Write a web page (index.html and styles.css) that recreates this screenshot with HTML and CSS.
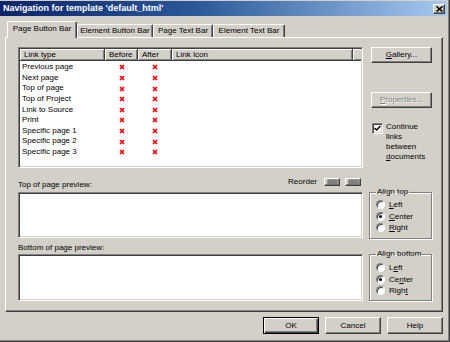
FILE: index.html
```html
<!DOCTYPE html>
<html>
<head>
<meta charset="utf-8">
<link rel="stylesheet" href="styles.css">
</head>
<body>
<div class="dialog">
  <div class="titlebar">
    <span class="title">Navigation for template 'default_html'</span>
    <span class="close"><svg width="7" height="6" viewBox="0 0 7 6"><path d="M0.5 0.5 L6.5 5.5 M6.5 0.5 L0.5 5.5" stroke="#000" stroke-width="1.6" fill="none"/></svg></span>
  </div>
  <div class="tabs">
    <div class="tab active t1">Page Button Bar</div>
    <div class="tab t2">Element Button Bar</div>
    <div class="tab t3">Page Text Bar</div>
    <div class="tab t4">Element Text Bar</div>
  </div>
  <div class="panel">
    <div class="left">
      <div class="list">
        <div class="list-head">
          <div class="hcell">Link type</div>
          <div class="hcell">Before</div>
          <div class="hcell">After</div>
          <div class="hcell">Link Icon</div>
          <div class="hcell"></div>
        </div>
        <div class="list-body">
          <div class="row"><span class="name">Previous page</span><span class="x"><svg viewBox="0 0 6 6"><path d="M1 1L5 5M5 1L1 5"/></svg></span><span class="x"><svg viewBox="0 0 6 6"><path d="M1 1L5 5M5 1L1 5"/></svg></span></div>
          <div class="row"><span class="name">Next page</span><span class="x"><svg viewBox="0 0 6 6"><path d="M1 1L5 5M5 1L1 5"/></svg></span><span class="x"><svg viewBox="0 0 6 6"><path d="M1 1L5 5M5 1L1 5"/></svg></span></div>
          <div class="row"><span class="name">Top of page</span><span class="x"><svg viewBox="0 0 6 6"><path d="M1 1L5 5M5 1L1 5"/></svg></span><span class="x"><svg viewBox="0 0 6 6"><path d="M1 1L5 5M5 1L1 5"/></svg></span></div>
          <div class="row"><span class="name">Top of Project</span><span class="x"><svg viewBox="0 0 6 6"><path d="M1 1L5 5M5 1L1 5"/></svg></span><span class="x"><svg viewBox="0 0 6 6"><path d="M1 1L5 5M5 1L1 5"/></svg></span></div>
          <div class="row"><span class="name">Link to Source</span><span class="x"><svg viewBox="0 0 6 6"><path d="M1 1L5 5M5 1L1 5"/></svg></span><span class="x"><svg viewBox="0 0 6 6"><path d="M1 1L5 5M5 1L1 5"/></svg></span></div>
          <div class="row"><span class="name">Print</span><span class="x"><svg viewBox="0 0 6 6"><path d="M1 1L5 5M5 1L1 5"/></svg></span><span class="x"><svg viewBox="0 0 6 6"><path d="M1 1L5 5M5 1L1 5"/></svg></span></div>
          <div class="row"><span class="name">Specific page 1</span><span class="x"><svg viewBox="0 0 6 6"><path d="M1 1L5 5M5 1L1 5"/></svg></span><span class="x"><svg viewBox="0 0 6 6"><path d="M1 1L5 5M5 1L1 5"/></svg></span></div>
          <div class="row"><span class="name">Specific page 2</span><span class="x"><svg viewBox="0 0 6 6"><path d="M1 1L5 5M5 1L1 5"/></svg></span><span class="x"><svg viewBox="0 0 6 6"><path d="M1 1L5 5M5 1L1 5"/></svg></span></div>
          <div class="row"><span class="name">Specific page 3</span><span class="x"><svg viewBox="0 0 6 6"><path d="M1 1L5 5M5 1L1 5"/></svg></span><span class="x"><svg viewBox="0 0 6 6"><path d="M1 1L5 5M5 1L1 5"/></svg></span></div>
        </div>
      </div>
      <div class="label-row">
        <span class="label">Top of page preview:</span>
        <div class="reorder">
          <span class="reorder-text">Reorder</span>
          <span class="mini"><span class="mini-icon"></span></span>
          <span class="mini"><span class="mini-icon"></span></span>
        </div>
      </div>
      <div class="preview top"></div>
      <div class="label-row2"><span class="label">Bottom of page preview:</span></div>
      <div class="preview bottom"></div>
    </div>
    <div class="right">
      <div class="btn gallery"><span><u>G</u>allery...</span></div>
      <div class="btn props disabled"><span><u>P</u>roperties...</span></div>
      <div class="check">
        <span class="checkbox"><svg width="7" height="7" viewBox="0 0 7 7"><path d="M0.5 3 L2.5 5 L6.5 1" stroke="#000" stroke-width="1.5" fill="none"/></svg></span>
        <span class="check-text">Continue<br>links<br>between<br><u>d</u>ocuments</span>
      </div>
      <fieldset class="group gtop">
        <legend>Align top</legend>
        <div class="radio-row"><span class="radio"></span><span><u>L</u>eft</span></div>
        <div class="radio-row"><span class="radio on"></span><span><u>C</u>enter</span></div>
        <div class="radio-row"><span class="radio"></span><span><u>R</u>ight</span></div>
      </fieldset>
      <fieldset class="group gbottom">
        <legend>Align bottom</legend>
        <div class="radio-row"><span class="radio"></span><span>L<u>e</u>ft</span></div>
        <div class="radio-row"><span class="radio on"></span><span>Ce<u>n</u>ter</span></div>
        <div class="radio-row"><span class="radio"></span><span>Righ<u>t</u></span></div>
      </fieldset>
    </div>
  </div>
  <div class="buttons">
    <div class="btn big default"><span>OK</span></div>
    <div class="btn big"><span>Cancel</span></div>
    <div class="btn big"><span>Help</span></div>
  </div>
</div>
</body>
</html>
```

FILE: styles.css
```css
html, body {
  margin: 0;
  padding: 0;
  background: #d4d0c8;
}
body {
  font-family: "Liberation Sans", Arial, sans-serif;
  font-size: 8px;
  color: #000;
}
.dialog {
  width: 450px;
  height: 342px;
  box-sizing: border-box;
  padding: 1px 3px 2px 0;
  background: #d4d0c8;
  box-shadow: inset -1px -1px 0 #404040, inset -2px -2px 0 #808080;
  display: flex;
  flex-direction: column;
}
.titlebar {
  height: 15px;
  flex: none;
  background: linear-gradient(to right, #0a246a 0%, #2c5a9a 45%, #a6caf0 100%);
  display: flex;
  align-items: center;
  justify-content: space-between;
}
.title {
  color: #fff;
  font-weight: bold;
  font-size: 9px;
  padding-left: 3px;
  line-height: 15px;
}
.close {
  width: 12px;
  height: 10px;
  box-sizing: border-box;
  margin-right: 2px;
  background: #d4d0c8;
  border-top: 1px solid #fff;
  border-left: 1px solid #fff;
  border-right: 1px solid #404040;
  border-bottom: 1px solid #404040;
  box-shadow: inset -1px -1px 0 #808080;
  display: flex;
  align-items: center;
  justify-content: center;
}
.close svg { display: block; }

.tabs {
  height: 21px;
  flex: none;
  display: flex;
  align-items: flex-end;
  padding-left: 7px;
}
.tab {
  height: 13px;
  box-sizing: border-box;
  border-top: 1px solid #fff;
  border-left: 1px solid #fff;
  border-right: 1px solid #404040;
  box-shadow: inset -1px 0 0 #808080;
  border-radius: 2px 2px 0 0;
  display: flex;
  align-items: center;
  justify-content: center;
  white-space: nowrap;
  line-height: 10px;
}
.tab.active {
  height: 17px;
  margin-bottom: -1px;
  background: #d4d0c8;
  position: relative;
  z-index: 1;
  padding-bottom: 2px;
}
.t1 { width: 70px; }
.t2 { width: 76px; }
.t3 { width: 60px; }
.t4 { width: 72px; }

.panel {
  margin-left: 5px;
  width: 438px;
  height: 275px;
  flex: none;
  box-sizing: border-box;
  border-top: 1px solid #fff;
  border-left: 1px solid #fff;
  border-right: 1px solid #404040;
  border-bottom: 1px solid #404040;
  box-shadow: inset -1px -1px 0 #808080;
  padding: 9px 0 0 12px;
  display: flex;
  gap: 6px;
}
.left {
  width: 345px;
  display: flex;
  flex-direction: column;
}
.list, .preview {
  box-sizing: border-box;
  background: #fff;
  border-top: 1px solid #808080;
  border-left: 1px solid #808080;
  border-right: 1px solid #fff;
  border-bottom: 1px solid #fff;
  box-shadow: inset 1px 1px 0 #404040, inset -1px -1px 0 #d4d0c8;
}
.list {
  height: 121px;
  padding: 1px;
}
.list-head {
  display: grid;
  grid-template-columns: 85px 33px 34px 181px 1fr;
  height: 12px;
}
.hcell {
  background: #d4d0c8;
  box-sizing: border-box;
  border-right: 1px solid #404040;
  border-bottom: 1px solid #404040;
  box-shadow: inset 1px 1px 0 #fff, inset -1px -1px 0 #808080;
  padding-left: 4px;
  line-height: 11px;
  white-space: nowrap;
  overflow: hidden;
}
.hcell:last-child { border-right: none; box-shadow: inset 1px 1px 0 #fff, inset 0 -1px 0 #808080; }
.list-body {
  padding-top: 1px;
}
.row {
  display: grid;
  grid-template-columns: 85px 33px 34px;
  height: 10.625px;
  line-height: 10.625px;
}
.name { padding-left: 2px; white-space: nowrap; }
.x {
  display: flex;
  align-items: center;
  justify-content: center;
}
.x svg {
  width: 6px;
  height: 6px;
  display: block;
}
.x path {
  stroke: #ff0000;
  stroke-width: 1.7;
  fill: none;
}

.label-row {
  height: 24px;
  flex: none;
  display: flex;
  justify-content: space-between;
  align-items: flex-end;
  padding-bottom: 2px;
  box-sizing: border-box;
}
.label { line-height: 10px; white-space: nowrap; }
.reorder {
  align-self: flex-start;
  margin-top: 10px;
  margin-right: 2px;
  height: 8px;
  display: flex;
  align-items: center;
  gap: 5px;
}
.reorder-text { margin-right: 2px; line-height: 10px; }
.mini {
  width: 16px;
  height: 8px;
  box-sizing: border-box;
  border-top: 1px solid #fff;
  border-left: 1px solid #fff;
  border-right: 1px solid #404040;
  border-bottom: 1px solid #404040;
  box-shadow: inset -1px -1px 0 #808080;
  display: flex;
  align-items: center;
  justify-content: center;
}
.mini-icon {
  width: 9px;
  height: 4px;
  background: #808080;
  box-shadow: 0 0 0 0.5px #606060;
}
.preview.top { height: 46px; flex: none; }
.label-row2 {
  height: 16px;
  flex: none;
  display: flex;
  align-items: flex-end;
  padding-bottom: 1px;
  box-sizing: border-box;
}
.preview.bottom { height: 47px; flex: none; }

.right {
  width: 63px;
  display: flex;
  flex-direction: column;
}
.btn {
  box-sizing: border-box;
  background: #d4d0c8;
  border-top: 1px solid #fff;
  border-left: 1px solid #fff;
  border-right: 1px solid #404040;
  border-bottom: 1px solid #404040;
  box-shadow: inset -1px -1px 0 #808080;
  display: flex;
  align-items: center;
  justify-content: center;
  line-height: 10px;
  white-space: nowrap;
}
.gallery, .props {
  width: 61px;
  height: 16px;
  margin-left: 2px;
  flex: none;
}
.props { margin-top: 29px; }
.disabled { color: #808080; text-shadow: 1px 1px 0 #fff; }
.check {
  margin-top: 14px;
  display: flex;
  gap: 3px;
  padding-left: 3px;
}
.checkbox {
  width: 11px;
  height: 11px;
  margin-top: 1px;
  flex: none;
  box-sizing: border-box;
  background: #fff;
  border-top: 1px solid #808080;
  border-left: 1px solid #808080;
  border-right: 1px solid #fff;
  border-bottom: 1px solid #fff;
  box-shadow: inset 1px 1px 0 #404040, inset -1px -1px 0 #d4d0c8;
  display: flex;
  align-items: center;
  justify-content: center;
}
.checkbox svg { display: block; }
.check-text { line-height: 10px; }

.group {
  margin: 0;
  box-sizing: border-box;
  width: 63px;
  height: 52px;
  flex: none;
  padding: 0 0 0 6px;
  border: 1px solid #808080;
  box-shadow: inset 1px 1px 0 #fff, 1px 1px 0 #fff;
  min-width: 0;
}
.group legend {
  padding: 0 1px;
  line-height: 10px;
  white-space: nowrap;
}
.gtop { margin-top: 25px; padding-top: 2px; }
.gbottom { margin-top: 10px; padding-top: 3px; }
.radio-row {
  height: 11.5px;
  display: flex;
  align-items: center;
  gap: 4px;
  white-space: nowrap;
}
.radio {
  width: 9px;
  height: 9px;
  box-sizing: border-box;
  border-radius: 50%;
  background: #fff;
  border: 1px solid;
  border-color: #808080 #fff #fff #808080;
  box-shadow: inset 1px 1px 0 #404040;
  display: flex;
  align-items: center;
  justify-content: center;
  flex: none;
}
.radio.on::after {
  content: "";
  width: 3px;
  height: 3px;
  border-radius: 50%;
  background: #000;
}

.buttons {
  margin-top: 5px;
  display: flex;
  justify-content: flex-end;
  gap: 6px;
  padding-right: 4px;
}
.big {
  width: 56px;
  height: 17px;
}
.default {
  border: 1px solid #000;
  box-shadow: inset 1px 1px 0 #fff, inset -1px -1px 0 #404040, inset -2px -2px 0 #808080;
}
```
